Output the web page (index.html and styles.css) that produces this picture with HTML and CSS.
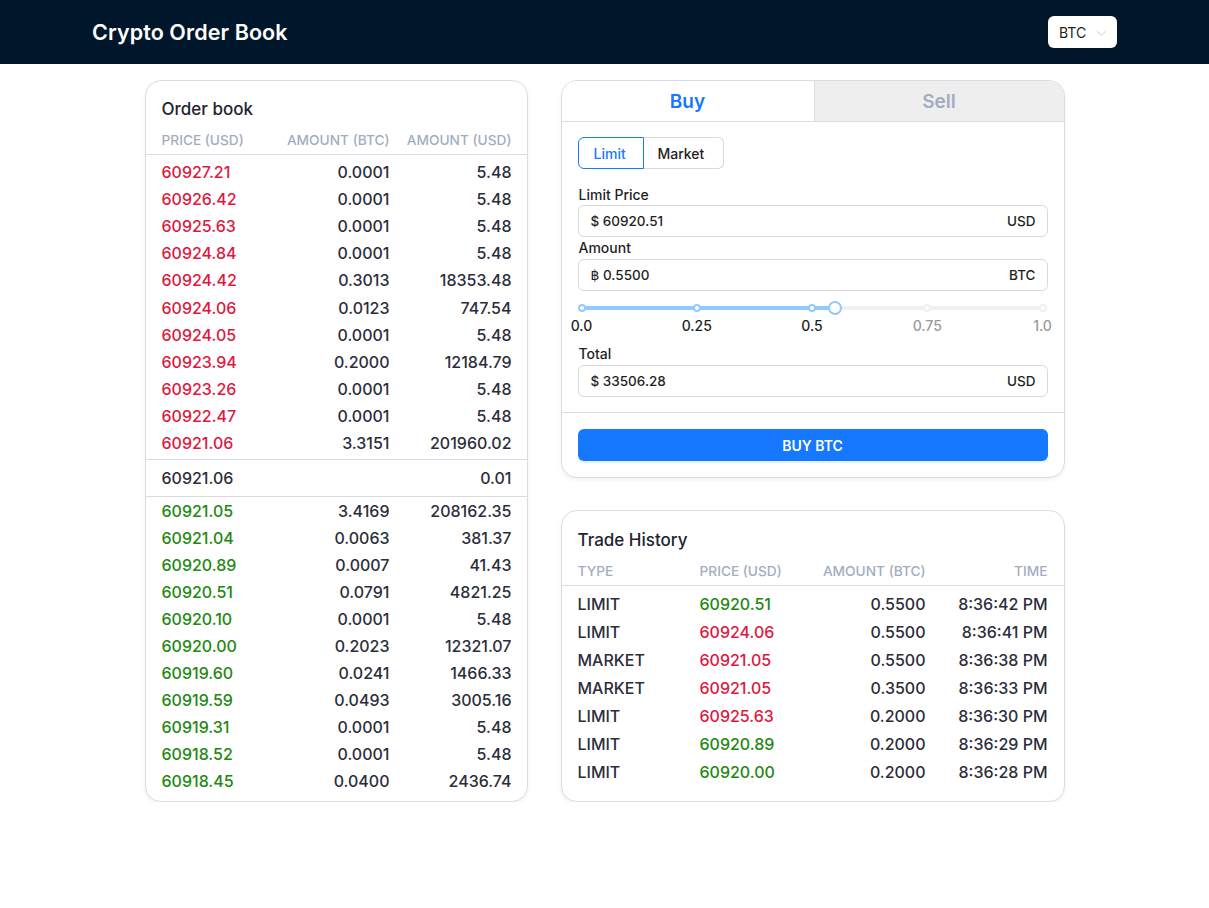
FILE: index.html
```html
<!DOCTYPE html>
<html lang="en">
<head>
<meta charset="utf-8">
<title>Crypto Order Book</title>
<link rel="stylesheet" href="styles.css">
</head>
<body>
<header class="topbar">
  <div class="topbar-inner">
    <h1 class="brand">Crypto Order Book</h1>
    <div class="select">
      <span>BTC</span>
      <svg class="chev" width="12" height="12" viewBox="0 0 12 12"><path d="M1 3.8 L6 8.6 L11 3.8" fill="none" stroke="#c4c4c4" stroke-width="1"/></svg>
    </div>
  </div>
</header>

<main class="layout">
  <section class="card orderbook">
    <h2 class="card-title">Order book</h2>
    <div class="ob-row ob-head">
      <span>Price (USD)</span><span class="r">Amount (BTC)</span><span class="r">Amount (USD)</span>
    </div>
    <div class="ob-list asks">
      <div class="ob-row"><span class="red">60927.21</span><span class="r">0.0001</span><span class="r">5.48</span></div>
      <div class="ob-row"><span class="red">60926.42</span><span class="r">0.0001</span><span class="r">5.48</span></div>
      <div class="ob-row"><span class="red">60925.63</span><span class="r">0.0001</span><span class="r">5.48</span></div>
      <div class="ob-row"><span class="red">60924.84</span><span class="r">0.0001</span><span class="r">5.48</span></div>
      <div class="ob-row"><span class="red">60924.42</span><span class="r">0.3013</span><span class="r">18353.48</span></div>
      <div class="ob-row"><span class="red">60924.06</span><span class="r">0.0123</span><span class="r">747.54</span></div>
      <div class="ob-row"><span class="red">60924.05</span><span class="r">0.0001</span><span class="r">5.48</span></div>
      <div class="ob-row"><span class="red">60923.94</span><span class="r">0.2000</span><span class="r">12184.79</span></div>
      <div class="ob-row"><span class="red">60923.26</span><span class="r">0.0001</span><span class="r">5.48</span></div>
      <div class="ob-row"><span class="red">60922.47</span><span class="r">0.0001</span><span class="r">5.48</span></div>
      <div class="ob-row"><span class="red">60921.06</span><span class="r">3.3151</span><span class="r">201960.02</span></div>
    </div>
    <div class="ob-row spread"><span>60921.06</span><span></span><span class="r">0.01</span></div>
    <div class="ob-list bids">
      <div class="ob-row"><span class="green">60921.05</span><span class="r">3.4169</span><span class="r">208162.35</span></div>
      <div class="ob-row"><span class="green">60921.04</span><span class="r">0.0063</span><span class="r">381.37</span></div>
      <div class="ob-row"><span class="green">60920.89</span><span class="r">0.0007</span><span class="r">41.43</span></div>
      <div class="ob-row"><span class="green">60920.51</span><span class="r">0.0791</span><span class="r">4821.25</span></div>
      <div class="ob-row"><span class="green">60920.10</span><span class="r">0.0001</span><span class="r">5.48</span></div>
      <div class="ob-row"><span class="green">60920.00</span><span class="r">0.2023</span><span class="r">12321.07</span></div>
      <div class="ob-row"><span class="green">60919.60</span><span class="r">0.0241</span><span class="r">1466.33</span></div>
      <div class="ob-row"><span class="green">60919.59</span><span class="r">0.0493</span><span class="r">3005.16</span></div>
      <div class="ob-row"><span class="green">60919.31</span><span class="r">0.0001</span><span class="r">5.48</span></div>
      <div class="ob-row"><span class="green">60918.52</span><span class="r">0.0001</span><span class="r">5.48</span></div>
      <div class="ob-row"><span class="green">60918.45</span><span class="r">0.0400</span><span class="r">2436.74</span></div>
    </div>
  </section>

  <div class="side">
    <section class="card trade">
      <div class="tabs">
        <div class="tab active">Buy</div>
        <div class="tab">Sell</div>
      </div>
      <div class="trade-body">
        <div class="segmented">
          <span class="seg active">Limit</span><span class="seg">Market</span>
        </div>
        <label class="field-label">Limit Price</label>
        <div class="input"><span>$ 60920.51</span><span>USD</span></div>
        <label class="field-label">Amount</label>
        <div class="input"><span><span class="baht">฿</span> 0.5500</span><span>BTC</span></div>
        <div class="slider">
          <div class="rail">
            <div class="fill" style="width:55%"></div>
            <span class="dot on" style="left:0%"></span>
            <span class="dot on" style="left:25%"></span>
            <span class="dot on" style="left:50%"></span>
            <span class="dot" style="left:75%"></span>
            <span class="dot" style="left:100%"></span>
            <span class="handle" style="left:55%"></span>
          </div>
          <div class="marks">
            <span class="mark on" style="left:0%">0.0</span>
            <span class="mark on" style="left:25%">0.25</span>
            <span class="mark on" style="left:50%">0.5</span>
            <span class="mark" style="left:75%">0.75</span>
            <span class="mark" style="left:100%">1.0</span>
          </div>
        </div>
        <label class="field-label">Total</label>
        <div class="input"><span>$ 33506.28</span><span>USD</span></div>
      </div>
      <div class="trade-foot">
        <button class="buy-btn">BUY BTC</button>
      </div>
    </section>

    <section class="card history">
      <h2 class="card-title">Trade History</h2>
      <div class="th-row th-head">
        <span>Type</span><span>Price (USD)</span><span class="r">Amount (BTC)</span><span class="r">Time</span>
      </div>
      <div class="th-list">
        <div class="th-row"><span>LIMIT</span><span class="green">60920.51</span><span class="r">0.5500</span><span class="r">8:36:42 PM</span></div>
        <div class="th-row"><span>LIMIT</span><span class="red">60924.06</span><span class="r">0.5500</span><span class="r">8:36:41 PM</span></div>
        <div class="th-row"><span>MARKET</span><span class="red">60921.05</span><span class="r">0.5500</span><span class="r">8:36:38 PM</span></div>
        <div class="th-row"><span>MARKET</span><span class="red">60921.05</span><span class="r">0.3500</span><span class="r">8:36:33 PM</span></div>
        <div class="th-row"><span>LIMIT</span><span class="red">60925.63</span><span class="r">0.2000</span><span class="r">8:36:30 PM</span></div>
        <div class="th-row"><span>LIMIT</span><span class="green">60920.89</span><span class="r">0.2000</span><span class="r">8:36:29 PM</span></div>
        <div class="th-row"><span>LIMIT</span><span class="green">60920.00</span><span class="r">0.2000</span><span class="r">8:36:28 PM</span></div>
      </div>
    </section>
  </div>
</main>
</body>
</html>
```

FILE: styles.css
```css
* { box-sizing: border-box; }
html, body { margin: 0; padding: 0; background: #fff; }
body {
  font-family: Inter, "Noto Sans", sans-serif;
  color: #2b2d3a;
}

.topbar {
  height: 64px;
  background: #00172b;
}
.topbar-inner {
  max-width: 1025px;
  height: 64px;
  margin: 0 auto;
  display: flex;
  align-items: center;
  justify-content: space-between;
}
.brand {
  margin: 0;
  color: #fff;
  font-size: 21.5px;
  font-weight: 600;
  letter-spacing: 0.1px;
}
.select {
  width: 69px;
  height: 32px;
  background: #fff;
  border-radius: 6px;
  display: flex;
  align-items: center;
  padding: 0 10px 0 11px;
  gap: 10px;
  font-size: 14px;
  color: #222;
}
.chev { margin-top: 1px; }

.layout {
  width: 920px;
  margin: 16px auto 0;
  display: grid;
  grid-template-columns: 383px 504px;
  column-gap: 33px;
  align-items: stretch;
}
.card {
  background: #fff;
  border: 1px solid #d9dde3;
  border-radius: 16px;
  box-shadow: 0 2px 4px rgba(0, 0, 0, 0.06);
  overflow: hidden;
}
.card-title {
  margin: 0 0 4px;
  padding: 0 16px;
  font-size: 17px;
  line-height: 24px;
  font-weight: 500;
  color: #23242f;
}

/* order book */
.orderbook { padding-top: 16px; padding-bottom: 6px; }
.ob-row {
  display: grid;
  grid-template-columns: 106px 106px 106px;
  column-gap: 16px;
  padding: 0 16px;
  height: 27.2px;
  align-items: center;
  font-size: 16px;
  font-weight: 500;
  color: #2b2d3a;
  white-space: nowrap;
}
.ob-row .r, .th-row .r { text-align: right; }
.ob-row.ob-head, .th-row.th-head {
  height: 30px;
  border-bottom: 1px solid #d9dde3;
  font-size: 13.7px;
  font-weight: 500;
  color: #a3adc0;
  text-transform: uppercase;
}
.asks { padding: 3px 0 2px; }
.spread {
  height: 38px;
  border-top: 1px solid #d9dde3;
  border-bottom: 1px solid #d9dde3;
}
.bids .ob-row { height: 27.05px; }
.red { color: #e0173e; }
.green { color: #22880f; }

/* right side */
.side {
  display: flex;
  flex-direction: column;
  gap: 32px;
}
.tabs {
  display: grid;
  grid-template-columns: 252px 1fr;
  height: 41px;
  border-bottom: 1px solid #d9dde3;
}
.tab {
  display: flex;
  align-items: center;
  justify-content: center;
  font-size: 19px;
  font-weight: 600;
  color: #a3adc0;
  background: #eeeeee;
  border-left: 1px solid #d9dde3;
}
.tab.active {
  background: #fff;
  color: #1677ff;
  border-left: none;
}
.trade-body {
  padding: 15px 16px 15px;
}
.segmented {
  display: inline-flex;
  height: 32px;
  margin-bottom: 15px;
}
.seg {
  display: flex;
  align-items: center;
  padding: 0 14px 0 15px;
  border: 1px solid #d9d9d9;
  font-size: 14px;
  font-weight: 500;
  color: #1f1f1f;
}
.seg:first-child { border-radius: 6px 0 0 6px; }
.seg:last-child { border-radius: 0 6px 6px 0; border-left: none; padding: 0 14px; width: 80px; }
.seg.active {
  border-color: #1677ff;
  color: #1677ff;
  width: 66px;
}
.field-label {
  display: block;
  height: 22px;
  line-height: 22px;
  font-size: 14px;
  font-weight: 500;
  color: #1f1f1f;
  padding-left: 1px;
}
.field-label:first-of-type { height: 21px; }
.input {
  height: 32px;
  border: 1px solid #d9d9d9;
  border-radius: 6px;
  display: flex;
  align-items: center;
  justify-content: space-between;
  padding: 0 11px 0 12px;
  font-size: 13.5px;
  font-weight: 500;
  color: #1f1f1f;
}
.baht { font-family: "DejaVu Sans", sans-serif; font-size: 14px; }

.slider {
  height: 52px;
  padding: 15px 5px 0 4px;
}
.rail {
  position: relative;
  height: 4px;
  background: #f0f0f0;
  border-radius: 2px;
}
.fill {
  position: absolute;
  left: 0; top: 0; bottom: 0;
  background: #91caff;
  border-radius: 2px;
}
.dot {
  position: absolute;
  top: 50%;
  width: 8px; height: 8px;
  margin: -4px 0 0 -4px;
  border-radius: 50%;
  background: #fff;
  border: 2px solid #f0f0f0;
}
.dot.on { border-color: #91caff; }
.handle {
  position: absolute;
  top: 50%;
  width: 14px; height: 14px;
  margin: -7px 0 0 -7px;
  border-radius: 50%;
  background: #fff;
  border: 2px solid #91caff;
}
.marks {
  position: relative;
  height: 20px;
  margin-top: 6px;
}
.mark {
  position: absolute;
  top: 0;
  transform: translateX(-50%);
  font-size: 14px;
  font-weight: 500;
  color: #9a9a9a;
  line-height: 20px;
}
.mark.on { color: #1f1f1f; }

.trade-foot {
  border-top: 1px solid #d9dde3;
  padding: 16px 16px 16px;
}
.buy-btn {
  display: block;
  width: 100%;
  height: 32px;
  border: none;
  border-radius: 6px;
  background: #1677ff;
  color: #fff;
  font-family: inherit;
  font-size: 14px;
  font-weight: 600;
  box-shadow: 0 2px 0 rgba(5, 145, 255, 0.1);
}

/* history */
.history { flex: 1; padding-top: 17px; }
.th-row {
  display: grid;
  grid-template-columns: 104px 104px 104px 104px;
  column-gap: 18px;
  padding: 0 16px;
  height: 28px;
  align-items: center;
  font-size: 16px;
  font-weight: 500;
  color: #2b2d3a;
  white-space: nowrap;
}
.th-list { padding-top: 4px; }
```
